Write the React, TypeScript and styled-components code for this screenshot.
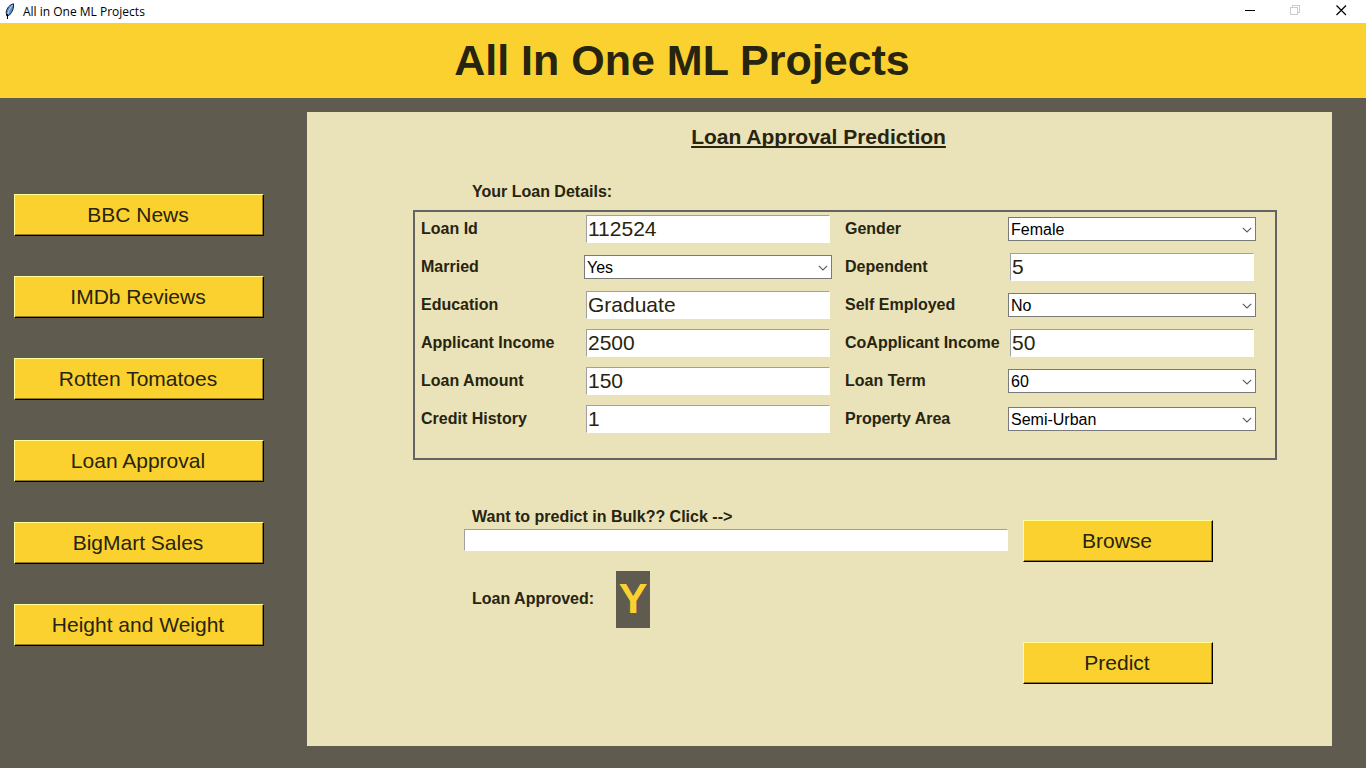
import React, { useId, useState } from "react";
import styled, { createGlobalStyle, css } from "styled-components";

const color = {
  yellow: "#fbd130",
  slate: "#5f5b4f",
  cream: "#eae2b9",
  ink: "#27240f",
};

const GlobalStyle = createGlobalStyle`
  *, *::before, *::after { box-sizing: border-box; }
  body {
    margin: 0;
    background: ${color.slate};
    color: ${color.ink};
    font-family: "Liberation Sans", Arial, sans-serif;
  }
`;

const Window = styled.div`
  display: flex;
  flex-direction: column;
  min-height: 100vh;
`;

const TitleBar = styled.div`
  display: flex;
  align-items: center;
  height: 23px;
  padding: 0 2px 0 4px;
  background: #fff;
  color: #000;
`;

const WindowTitle = styled.span`
  flex: 1;
  margin-left: 8px;
  font: 12px/20px "Open Sans", "Noto Sans", sans-serif;
`;

const WindowButton = styled.button`
  display: flex;
  align-items: flex-start;
  justify-content: center;
  width: 46px;
  height: 23px;
  padding: 5px 0 0;
  border: 0;
  background: none;
`;

const Banner = styled.header`
  display: flex;
  align-items: center;
  justify-content: center;
  height: 75px;
  padding: 0 2px 2px 0;
  background: ${color.yellow};
`;

const BannerTitle = styled.h1`
  margin: 0;
  font-size: 43px;
  line-height: 50px;
`;

const Body = styled.div`
  display: flex;
  flex: 1;
  gap: 43px;
  padding: 14px 34px 22px 14px;
`;

const Sidebar = styled.nav`
  display: flex;
  flex-direction: column;
  flex: none;
  gap: 40px;
  width: 250px;
  padding-top: 82px;
`;

const RaisedButton = styled.button<{ $width?: string }>`
  width: ${(p) => p.$width ?? "100%"};
  height: 42px;
  flex: none;
  padding: 0 2px 0 0;
  border: 1px solid;
  border-color: #ffff96 #000 #000 #ffff96;
  box-shadow: inset -1px -1px 0 #967d1d;
  background: ${color.yellow};
  color: ${color.ink};
  font: 21px/24px "Liberation Sans", Arial, sans-serif;
`;

const Panel = styled.main`
  flex: 1;
  min-width: 0;
  padding: 13px 55px 13px 106px;
  background: ${color.cream};
`;

const PanelTitle = styled.h2`
  margin: 0 53px 34px 0;
  font-size: 21px;
  line-height: 24px;
  text-align: center;
  text-decoration: underline;
  text-decoration-thickness: 2px;
  text-underline-offset: 2px;
  text-decoration-skip-ink: none;
`;

const labelText = css`
  font-size: 16px;
  font-weight: bold;
  line-height: 18px;
`;

const SectionLabel = styled.div`
  ${labelText}
  margin: 0 0 9px 59px;
`;

const Details = styled.div`
  display: grid;
  grid-template-columns: 1fr 1fr;
  column-gap: 13px;
  padding: 0 19px 22px 6px;
  border: 2px solid #646464;
`;

const Column = styled.div`
  display: flex;
  flex-direction: column;
  gap: 4px;
`;

const FieldRow = styled.div`
  display: grid;
  grid-template-columns: 163px minmax(0, 1fr);
  align-items: center;
  height: 34px;
`;

const Label = styled.label`
  ${labelText}
`;

const Entry = styled.input`
  min-width: 0;
  height: 28px;
  margin: 0 2px;
  padding: 0 1px;
  border: 1px solid;
  border-color: #a0a0a0 #fff #fff #a0a0a0;
  border-radius: 0;
  background: #fff;
  color: ${color.ink};
  font: 21px/24px "Liberation Sans", Arial, sans-serif;
`;

const FileEntry = styled(Entry)`
  width: 100%;
  height: 22px;
  margin: 0;
  font-size: 16px;
`;

const ComboBox = styled.div`
  position: relative;
  display: flex;
`;

const ComboSelect = styled.select`
  appearance: none;
  width: 100%;
  height: 24px;
  padding: 1px 20px 0 2px;
  border: 1px solid #7a7a7a;
  border-radius: 0;
  background: #fff;
  color: #000;
  font: 16px/22px "Liberation Sans", Arial, sans-serif;
`;

const ComboArrow = styled.svg`
  position: absolute;
  top: 10px;
  right: 4px;
  pointer-events: none;
`;

const BulkRow = styled.div`
  display: flex;
  align-items: flex-end;
  gap: 15px;
  margin-top: 48px;
  padding: 0 64px 0 51px;
`;

const BulkField = styled.div`
  display: flex;
  flex: 1;
  flex-direction: column;
  gap: 3px;
  padding-bottom: 11px;
`;

const BulkLabel = styled(Label)`
  padding-left: 8px;
`;

const ResultRow = styled.div`
  ${labelText}
  display: flex;
  align-items: center;
  gap: 22px;
  margin: 9px 0 14px 59px;
`;

const ResultLabel = styled.span`
  padding-bottom: 2px;
`;

const Verdict = styled.output`
  width: 34px;
  padding: 3px 0 5px;
  background: ${color.slate};
  color: ${color.yellow};
  font-size: 43px;
  line-height: 49px;
  text-align: center;
`;

const Actions = styled.div`
  display: flex;
  justify-content: flex-end;
  padding-right: 64px;
`;

const FeatherIcon = () => (
  <svg width="11" height="17" viewBox="0 0 11 17" aria-hidden="true">
    <path d="M9.500 .8C6 1.600 2.500 5 2.200 9.500L2.800 13L5.500 12C8.500 9 10 5 9.500 .8Z" fill="#5b8fd0" stroke="#17202e" />
    <path d="M8.500 2C6.500 4 4.500 8 3.500 12" fill="none" stroke="#c5dcf5" />
    <path d="M3.500 11V16" stroke="#000" />
  </svg>
);

const MinimizeIcon = () => (
  <svg width="11" height="11" shapeRendering="crispEdges" aria-hidden="true">
    <path d="M1 5.500H11" stroke="#000" />
  </svg>
);

const RestoreIcon = () => (
  <svg width="11" height="11" fill="none" stroke="#ccc" shapeRendering="crispEdges" aria-hidden="true">
    <path d="M.5 2.500H7.500V9.500H.5ZM2.500 2.500V.5H9.500V7.500H7.500" />
  </svg>
);

const CloseIcon = () => (
  <svg width="11" height="11" stroke="#000" aria-hidden="true">
    <path d="M.5 .5L10 10M10 .5L.5 10" strokeWidth="1.2" />
  </svg>
);

type Field = { label: string; value: string; options?: string[] };

const leftFields: Field[] = [
  { label: "Loan Id", value: "112524" },
  { label: "Married", value: "Yes", options: ["Yes", "No"] },
  { label: "Education", value: "Graduate" },
  { label: "Applicant Income", value: "2500" },
  { label: "Loan Amount", value: "150" },
  { label: "Credit History", value: "1" },
];

const rightFields: Field[] = [
  { label: "Gender", value: "Female", options: ["Male", "Female"] },
  { label: "Dependent", value: "5" },
  { label: "Self Employed", value: "No", options: ["Yes", "No"] },
  { label: "CoApplicant Income", value: "50" },
  { label: "Loan Term", value: "60", options: ["12", "36", "60", "120", "360"] },
  { label: "Property Area", value: "Semi-Urban", options: ["Urban", "Semi-Urban", "Rural"] },
];

const projects = ["BBC News", "IMDb Reviews", "Rotten Tomatoes", "Loan Approval", "BigMart Sales", "Height and Weight"];

function FormField({ label, value, options }: Field) {
  const id = useId();
  return (
    <FieldRow>
      <Label htmlFor={id}>{label}</Label>
      {options ? (
        <ComboBox>
          <ComboSelect id={id} defaultValue={value}>
            {options.map((o) => (
              <option key={o}>{o}</option>
            ))}
          </ComboSelect>
          <ComboArrow width="10" height="6" viewBox="0 0 10 6" aria-hidden="true">
            <path d="M.8 .8L5 5L9.200 .8" fill="none" stroke="#606060" strokeWidth="1.2" />
          </ComboArrow>
        </ComboBox>
      ) : (
        <Entry id={id} type="text" defaultValue={value} />
      )}
    </FieldRow>
  );
}

export default function App() {
  const [file, setFile] = useState("");
  return (
    <Window>
      <GlobalStyle />
      <TitleBar>
        <FeatherIcon />
        <WindowTitle>All in One ML Projects</WindowTitle>
        <WindowButton type="button" aria-label="Minimize"><MinimizeIcon /></WindowButton>
        <WindowButton type="button" aria-label="Restore" disabled><RestoreIcon /></WindowButton>
        <WindowButton type="button" aria-label="Close"><CloseIcon /></WindowButton>
      </TitleBar>
      <Banner>
        <BannerTitle>All In One ML Projects</BannerTitle>
      </Banner>
      <Body>
        <Sidebar>
          {projects.map((p) => (
            <RaisedButton key={p} type="button">{p}</RaisedButton>
          ))}
        </Sidebar>
        <Panel>
          <PanelTitle>Loan Approval Prediction</PanelTitle>
          <SectionLabel>Your Loan Details:</SectionLabel>
          <Details>
            <Column>{leftFields.map((f) => <FormField key={f.label} {...f} />)}</Column>
            <Column>{rightFields.map((f) => <FormField key={f.label} {...f} />)}</Column>
          </Details>
          <BulkRow>
            <BulkField>
              <BulkLabel htmlFor="bulk-file">Want to predict in Bulk?? Click --&gt;</BulkLabel>
              <FileEntry id="bulk-file" type="text" value={file} onChange={(e) => setFile(e.target.value)} />
            </BulkField>
            <RaisedButton type="button" $width="190px">Browse</RaisedButton>
          </BulkRow>
          <ResultRow>
            <ResultLabel>Loan Approved:</ResultLabel>
            <Verdict>Y</Verdict>
          </ResultRow>
          <Actions>
            <RaisedButton type="button" $width="190px">Predict</RaisedButton>
          </Actions>
        </Panel>
      </Body>
    </Window>
  );
}
